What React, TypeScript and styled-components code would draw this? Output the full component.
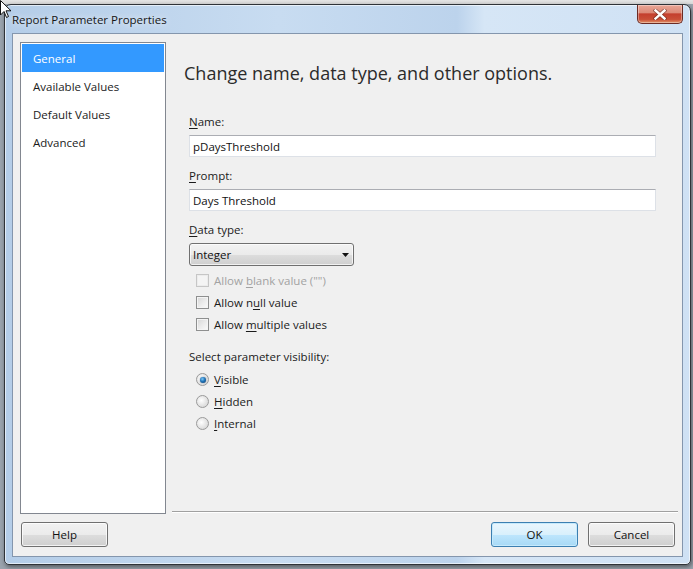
import React from "react";
import styled, { createGlobalStyle } from "styled-components";

const Global = createGlobalStyle`
  html, body { margin: 0; padding: 0; }
  body {
    background: #c6c6c6;
    font-family: "Open Sans", "Noto Sans", "DejaVu Sans", sans-serif;
    font-size: 11.5px;
    color: #1b1b1b;
  }
  * { box-sizing: border-box; }
`;

const Screen = styled.div`
  position: relative;
  width: 693px;
  height: 569px;
  overflow: hidden;
  padding: 4px 0 0 4px;
  background: linear-gradient(to bottom, #e4e4e4 0px, #d7d7d7 4px, #9aa3ad 4px);
`;

const Cursor = styled.svg`
  position: absolute;
  left: 0;
  top: 0;
  z-index: 5;
`;

const Window = styled.div`
  width: 687px;
  height: 561px;
  border: 1px solid #2f3338;
  border-radius: 7px 7px 5px 5px;
  background: linear-gradient(
    to right,
    #b4cde8 0%,
    #c8dcf1 40%,
    #bcd3ec 66%,
    #d6e6f6 70%,
    #cfe1f4 100%
  );
  box-shadow: 1px 2px 4px rgba(0, 0, 0, 0.45), inset 0 0 0 1px rgba(255, 255, 255, 0.6);
  padding: 0 7px 7px 7px;
  display: flex;
  flex-direction: column;
`;

const TitleBar = styled.div`
  height: 28px;
  display: flex;
  justify-content: space-between;
  align-items: flex-start;
`;

const TitleText = styled.div`
  padding-top: 8px;
  font-size: 11.5px;
  line-height: 14px;
  color: #161616;
  text-shadow: 0 0 6px rgba(255, 255, 255, 0.9);
`;

const CloseButton = styled.div`
  width: 46px;
  height: 19px;
  border: 1px solid #6b2b24;
  border-top: none;
  border-radius: 0 0 5px 5px;
  background: linear-gradient(to bottom, #eaa696 0%, #dc8a78 42%, #c43f2e 50%, #c94f37 80%, #e29468 100%);
  box-shadow: inset 0 0 0 1px rgba(255, 255, 255, 0.35);
  display: flex;
  align-items: center;
  justify-content: center;
`;

const Client = styled.div`
  flex: 1;
  border: 1px solid #8496ad;
  background: #f0f0f0;
  display: flex;
  flex-direction: column;
`;

const Main = styled.div`
  flex: 1;
  display: flex;
  padding: 8px 0 0 7px;
  min-height: 0;
`;

const NavList = styled.div`
  width: 146px;
  height: 472px;
  border: 1px solid #828790;
  background: #ffffff;
  padding: 1px;
  display: flex;
  flex-direction: column;
`;

const NavItem = styled.div<{ $selected?: boolean }>`
  height: 28px;
  display: flex;
  align-items: center;
  padding-left: 11px;
  font-size: 11.5px;
  color: ${(p) => (p.$selected ? "#ffffff" : "#1b1b1b")};
  background: ${(p) => (p.$selected ? "#3399ff" : "transparent")};
`;

const Content = styled.div`
  flex: 1;
  display: flex;
  flex-direction: column;
  height: 472px;
`;

const Heading = styled.h1`
  margin: 19px 0 0 18px;
  font-size: 18px;
  font-weight: 400;
  line-height: 24px;
  color: #2b2b2b;
`;

const Form = styled.div`
  padding: 0 26px 0 23px;
  display: flex;
  flex-direction: column;
  margin-top: 29px;
`;

const Label = styled.div<{ $gap?: number }>`
  line-height: 16px;
  margin-top: ${(p) => p.$gap ?? 0}px;
  color: #1b1b1b;
`;

const Key = styled.span`
  text-decoration: underline;
  text-underline-offset: 2px;
`;

const TextBox = styled.div`
  margin-top: 5px;
  height: 22px;
  border: 1px solid #dde1e7;
  border-top-color: #abadb3;
  background: #ffffff;
  padding-left: 3px;
  display: flex;
  align-items: center;
  color: #111;
`;

const Select = styled.div`
  margin-top: 5px;
  width: 165px;
  height: 23px;
  border: 1px solid #707070;
  border-radius: 3px;
  background: linear-gradient(to bottom, #f2f2f2 0%, #ebebeb 50%, #dddddd 51%, #cfcfcf 100%);
  box-shadow: inset 0 0 0 1px rgba(255, 255, 255, 0.7);
  padding: 0 4px 0 3px;
  display: flex;
  align-items: center;
  justify-content: space-between;
  color: #111;
`;

const OptionGroup = styled.div`
  margin-top: 4px;
  display: flex;
  flex-direction: column;
`;

const OptionRow = styled.div<{ $disabled?: boolean }>`
  height: 22px;
  padding-left: 7px;
  padding-bottom: 1px;
  display: flex;
  align-items: center;
  gap: 5px;
  color: ${(p) => (p.$disabled ? "#a2a2a2" : "#1b1b1b")};
`;

const CheckBox = styled.span<{ $disabled?: boolean }>`
  width: 13px;
  height: 13px;
  flex: none;
  border: 1px solid ${(p) => (p.$disabled ? "#c6c6c6" : "#8e8f8f")};
  background: ${(p) =>
    p.$disabled
      ? "#f4f4f4"
      : "linear-gradient(135deg, #d6d6d6 0%, #eeeeee 60%, #fafafa 100%)"};
  box-shadow: inset 0 0 0 1px ${(p) => (p.$disabled ? "#ececec" : "#f4f4f4")};
`;

const Radio = styled.span<{ $checked?: boolean }>`
  width: 13px;
  height: 13px;
  flex: none;
  border-radius: 50%;
  border: 1px solid #9a9a9a;
  background: radial-gradient(circle at 40% 40%, #ffffff 0%, #e6e6e6 50%, #cfcfcf 100%);
  display: flex;
  align-items: center;
  justify-content: center;
  &::after {
    content: "";
    display: ${(p) => (p.$checked ? "block" : "none")};
    width: 6px;
    height: 6px;
    border-radius: 50%;
    background: radial-gradient(circle at 40% 35%, #7fc8f8 0%, #1f74b8 45%, #0b3566 100%);
    box-shadow: 0 0 1px #0d3a6e;
  }
`;

const Separator = styled.div`
  margin: auto 4px 1px 6px;
  height: 2px;
  border-top: 1px solid #a0a0a0;
  border-bottom: 1px solid #ffffff;
`;

const Footer = styled.div`
  height: 42px;
  padding: 8px 7px 9px 8px;
  display: flex;
  align-items: flex-start;
  justify-content: space-between;
`;

const ButtonGroup = styled.div`
  display: flex;
  gap: 10px;
`;

const Button = styled.button<{ $default?: boolean }>`
  width: 87px;
  height: 25px;
  border: 1px solid ${(p) => (p.$default ? "#3c7fb1" : "#707070")};
  border-radius: 3px;
  background: ${(p) =>
    p.$default
      ? "linear-gradient(to bottom, #eaf6fd 0%, #d9f0fc 50%, #bee6fd 51%, #a7d9f5 100%)"
      : "linear-gradient(to bottom, #f2f2f2 0%, #ebebeb 50%, #dddddd 51%, #cfcfcf 100%)"};
  box-shadow: inset 0 0 0 1px ${(p) => (p.$default ? "#c6eafc" : "rgba(255,255,255,0.75)")};
  font-family: inherit;
  font-size: 11.5px;
  color: #111;
  padding: 0;
`;

export default function App() {
  return (
    <>
      <Global />
      <Screen>
        <Cursor width="14" height="20" viewBox="0 0 14 20">
          <path d="M0.5 0.5 L0.5 15 L4 11.5 L6.5 17.5 L8.5 16.5 L6 10.8 L11 10.8 Z" fill="#ffffff" stroke="#111" strokeWidth="1" />
        </Cursor>
        <Window>
          <TitleBar>
            <TitleText>Report Parameter Properties</TitleText>
            <CloseButton>
              <svg width="14" height="11" viewBox="0 0 14 11">
                <path d="M2.5 1.5 L11.5 9.5 M11.5 1.5 L2.5 9.5" stroke="#5a2219" strokeWidth="4" strokeLinecap="square" opacity="0.55" />
                <path d="M2.5 1.5 L11.5 9.5 M11.5 1.5 L2.5 9.5" stroke="#ffffff" strokeWidth="2.4" strokeLinecap="square" />
              </svg>
            </CloseButton>
          </TitleBar>
          <Client>
            <Main>
              <NavList>
                <NavItem $selected>General</NavItem>
                <NavItem>Available Values</NavItem>
                <NavItem>Default Values</NavItem>
                <NavItem>Advanced</NavItem>
              </NavList>
              <Content>
                <Heading>Change name, data type, and other options.</Heading>
                <Form>
                  <Label>
                    <Key>N</Key>ame:
                  </Label>
                  <TextBox>pDaysThreshold</TextBox>
                  <Label $gap={11}>
                    <Key>P</Key>rompt:
                  </Label>
                  <TextBox>Days Threshold</TextBox>
                  <Label $gap={11}>
                    <Key>D</Key>ata type:
                  </Label>
                  <Select>
                    <span>Integer</span>
                    <svg width="7" height="4" viewBox="0 0 7 4">
                      <path d="M0 0 L7 0 L3.5 4 Z" fill="#111" />
                    </svg>
                  </Select>
                  <OptionGroup>
                    <OptionRow $disabled>
                      <CheckBox $disabled />
                      <span>
                        Allow <Key>b</Key>lank value ("")
                      </span>
                    </OptionRow>
                    <OptionRow>
                      <CheckBox />
                      <span>
                        Allow n<Key>u</Key>ll value
                      </span>
                    </OptionRow>
                    <OptionRow>
                      <CheckBox />
                      <span>
                        Allow <Key>m</Key>ultiple values
                      </span>
                    </OptionRow>
                  </OptionGroup>
                  <Label $gap={13}>Select parameter visibility:</Label>
                  <OptionGroup>
                    <OptionRow>
                      <Radio $checked />
                      <span>
                        <Key>V</Key>isible
                      </span>
                    </OptionRow>
                    <OptionRow>
                      <Radio />
                      <span>
                        <Key>H</Key>idden
                      </span>
                    </OptionRow>
                    <OptionRow>
                      <Radio />
                      <span>
                        <Key>I</Key>nternal
                      </span>
                    </OptionRow>
                  </OptionGroup>
                </Form>
                <Separator />
              </Content>
            </Main>
            <Footer>
              <Button>Help</Button>
              <ButtonGroup>
                <Button $default>OK</Button>
                <Button>Cancel</Button>
              </ButtonGroup>
            </Footer>
          </Client>
        </Window>
      </Screen>
    </>
  );
}
